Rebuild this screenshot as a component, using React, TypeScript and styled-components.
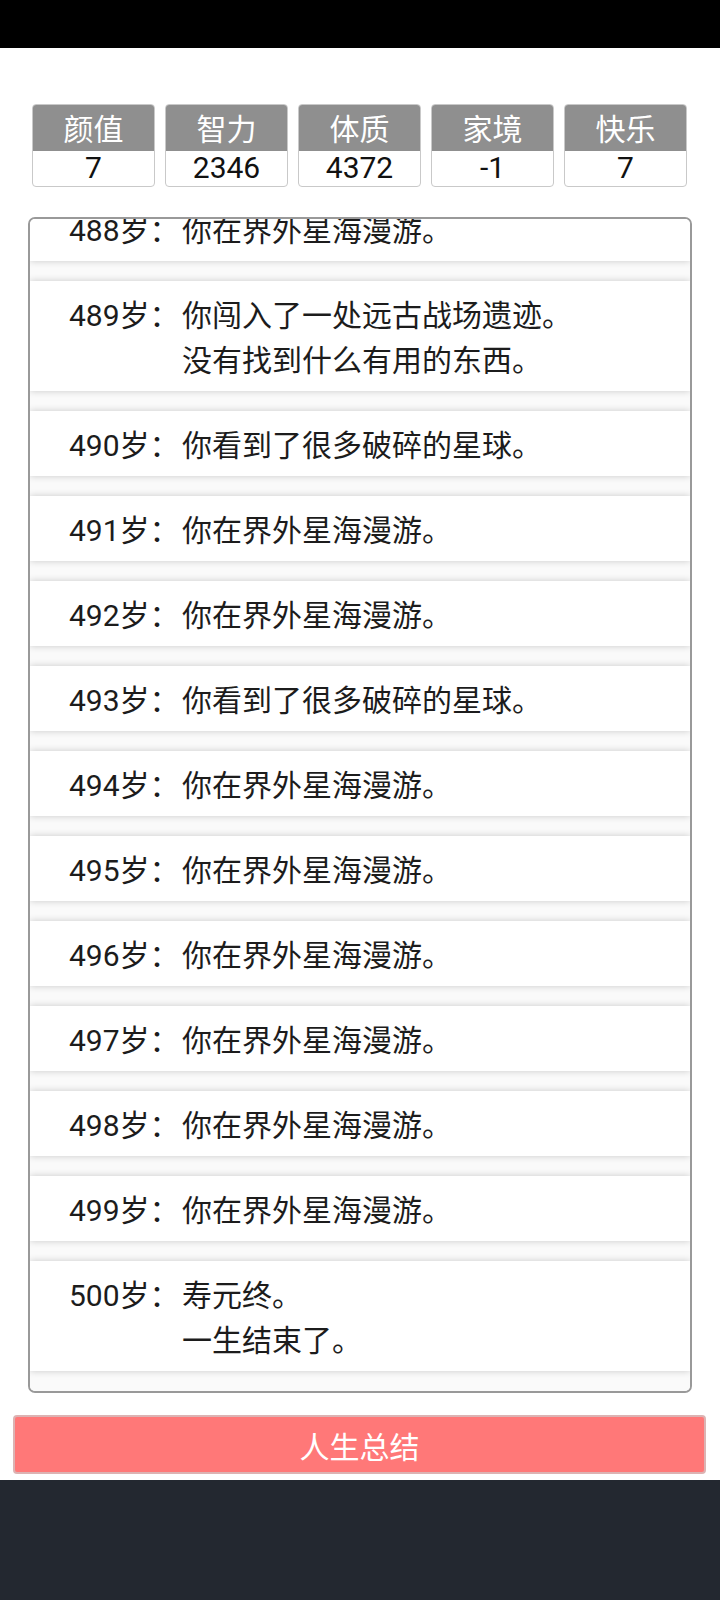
import React, { useLayoutEffect, useRef } from "react";
import styled, { createGlobalStyle } from "styled-components";

const GlobalStyle = createGlobalStyle`
  html, body {
    margin: 0;
    padding: 0;
    background: #ffffff;
  }
  body {
    font-family: Roboto, "Noto Sans CJK SC", "Noto Sans", sans-serif;
    color: #222;
  }
  * { box-sizing: border-box; }
`;

const Page = styled.div`
  width: 720px;
  height: 1600px;
  display: flex;
  flex-direction: column;
  background: #fff;
`;

const StatusBar = styled.div`
  height: 48px;
  flex: none;
  background: #000;
`;

const StatsRow = styled.div`
  display: grid;
  grid-template-columns: repeat(5, 123px);
  column-gap: 10px;
  margin: 56px 0 0 32px;
  flex: none;
`;

const StatCard = styled.div`
  height: 83px;
  border: 1.5px solid #c9c9c9;
  border-radius: 4px;
  overflow: hidden;
  display: flex;
  flex-direction: column;
  background: #fff;
`;

const StatLabel = styled.div`
  height: 46px;
  padding-top: 6px;
  background: #8f8f8f;
  color: #fff;
  font-size: 30px;
  line-height: 38px;
  text-align: center;
`;

const StatValue = styled.div`
  flex: 1;
  color: #111;
  font-size: 30px;
  line-height: 34px;
  text-align: center;
`;

const LogBox = styled.div`
  margin: 30px 28px 0 28px;
  height: 1176px;
  flex: none;
  border: 2px solid #999;
  border-radius: 7px;
  overflow-y: auto;
  background: #fafafa;
  scrollbar-width: none;
  &::-webkit-scrollbar { display: none; }
`;

const LogList = styled.ul`
  list-style: none;
  margin: 0;
  padding: 0;
  display: flex;
  flex-direction: column;
  gap: 20px;
  padding-bottom: 20px;
`;

const LogItem = styled.li`
  background: #fff;
  box-shadow: 0 0 7px rgba(0, 0, 0, 0.2);
  padding: 12px 0 8px 39px;
  display: grid;
  grid-template-columns: 113px 1fr;
  font-size: 30px;
  line-height: 45px;
  color: #1c1c1c;
`;

const Age = styled.span`
  white-space: nowrap;
`;

const Lines = styled.div`
  display: flex;
  flex-direction: column;
`;

const SummaryButton = styled.button`
  margin: 22px 14px 0 13px;
  height: 59px;
  flex: none;
  border: 2px solid #dcb3b3;
  border-radius: 4px;
  background: #ff7878;
  color: #fff;
  font-family: Roboto, "Noto Sans CJK SC", sans-serif;
  font-size: 30px;
  padding: 0;
  cursor: pointer;
`;

const Footer = styled.div`
  margin-top: 6px;
  flex: 1;
  background: #232830;
`;

const stats = [
  { label: "颜值", value: "7" },
  { label: "智力", value: "2346" },
  { label: "体质", value: "4372" },
  { label: "家境", value: "-1" },
  { label: "快乐", value: "7" },
];

const roam = ["你在界外星海漫游。"];
const ruins = ["你闯入了一处远古战场遗迹。", "没有找到什么有用的东西。"];
const planets = ["你看到了很多破碎的星球。"];

const logs: { age: number; lines: string[] }[] = [
  { age: 488, lines: roam },
  { age: 489, lines: ruins },
  { age: 490, lines: planets },
  { age: 491, lines: roam },
  { age: 492, lines: roam },
  { age: 493, lines: planets },
  { age: 494, lines: roam },
  { age: 495, lines: roam },
  { age: 496, lines: roam },
  { age: 497, lines: roam },
  { age: 498, lines: roam },
  { age: 499, lines: roam },
  { age: 500, lines: ["寿元终。", "一生结束了。"] },
];

export default function App() {
  const boxRef = useRef<HTMLDivElement>(null);

  useLayoutEffect(() => {
    const el = boxRef.current;
    if (el) el.scrollTop = el.scrollHeight;
  }, []);

  return (
    <Page>
      <GlobalStyle />
      <StatusBar />
      <StatsRow>
        {stats.map((s) => (
          <StatCard key={s.label}>
            <StatLabel>{s.label}</StatLabel>
            <StatValue>{s.value}</StatValue>
          </StatCard>
        ))}
      </StatsRow>
      <LogBox ref={boxRef}>
        <LogList>
          {logs.map((l) => (
            <LogItem key={l.age}>
              <Age>{l.age}岁：</Age>
              <Lines>
                {l.lines.map((t, i) => (
                  <span key={i}>{t}</span>
                ))}
              </Lines>
            </LogItem>
          ))}
        </LogList>
      </LogBox>
      <SummaryButton>人生总结</SummaryButton>
      <Footer />
    </Page>
  );
}
